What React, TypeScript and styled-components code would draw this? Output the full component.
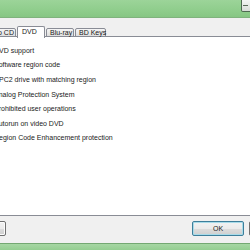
import React from "react";
import styled, { createGlobalStyle } from "styled-components";

const Global = createGlobalStyle`
  html, body { margin: 0; padding: 0; background: #f0f0f0; }
  body { width: 250px; height: 250px; overflow: hidden; }
`;

const Frame = styled.div`
  width: 250px;
  height: 250px;
  overflow: hidden;
  display: flex;
  flex-direction: column;
  font-family: "Liberation Sans", Arial, sans-serif;
  font-size: 7px;
  color: #1a1a1a;
`;

const TitleBar = styled.div`
  height: 18px;
  flex: none;
  box-sizing: border-box;
  background: linear-gradient(180deg, #9cd499 0%, #8fcd8c 60%, #86c683 100%);
  border-bottom: 1px solid #7fb27d;
  display: flex;
  justify-content: flex-end;
  align-items: flex-start;
`;

const CaptionButton = styled.div`
  width: 12px;
  height: 12px;
  margin-right: -3px;
  box-sizing: border-box;
  border: 1px solid #4f6a52;
  border-top: none;
  border-radius: 0 0 2px 2px;
  background: linear-gradient(180deg, #f4f6f4, #d8ddd8);
  display: flex;
  align-items: center;
  justify-content: center;
`;

const Dash = styled.div`
  width: 5px;
  height: 1px;
  background: #5a6a5a;
  margin-left: -3px;
`;

const Body = styled.div`
  flex: 1;
  margin: 0 -60px 0 -40px;
  background: #f0f0f0;
  display: flex;
  flex-direction: column;
`;

const TabRow = styled.div`
  height: 19px;
  flex: none;
  box-sizing: border-box;
  padding: 8px 0 0 20px;
  display: flex;
  align-items: flex-end;
  gap: 1px;
  position: relative;
  z-index: 2;
`;

const Tab = styled.div<{ $selected?: boolean; $w: number }>`
  width: ${(p) => p.$w}px;
  height: 9px;
  box-sizing: border-box;
  border: 1px solid #898c95;
  border-bottom: ${(p) => (p.$selected ? "none" : "1px solid #898c95")};
  border-radius: 2px 2px 0 0;
  background: ${(p) =>
    p.$selected ? "#ffffff" : "linear-gradient(180deg, #f5f5f5 0%, #ebebeb 50%, #dedede 100%)"};
  padding-left: ${(p) => (p.$selected ? 4 : 3)}px;
  display: flex;
  align-items: center;
  white-space: nowrap;
  ${(p) => (p.$selected ? "margin-bottom: -1px; height: 12px; padding-bottom: 2px;" : "")}
`;

const Panel = styled.div`
  flex: 1;
  margin-top: -1px;
  background: #ffffff;
  border: 1px solid #898c95;
  box-sizing: border-box;
  padding: 6px 0 0 19px;
  display: flex;
  flex-direction: column;
  position: relative;
  z-index: 1;
`;

const Row = styled.div`
  height: 14.6px;
  display: flex;
  align-items: center;
  gap: 5px;
  white-space: nowrap;
`;

const Check = styled.div`
  width: 9px;
  height: 9px;
  box-sizing: border-box;
  border: 1px solid #8f8f8f;
  background: linear-gradient(135deg, #e6e6e6, #ffffff);
`;

const ButtonRow = styled.div`
  height: 27px;
  flex: none;
  box-sizing: border-box;
  padding: 5px 9px 0 7px;
  display: flex;
  align-items: flex-start;
  gap: 5px;
`;

const Spacer = styled.div`
  flex: 1;
`;

const Button = styled.div<{ $default?: boolean; $w: number }>`
  width: ${(p) => p.$w}px;
  height: 15px;
  box-sizing: border-box;
  border: 1px solid ${(p) => (p.$default ? "#3d7e9a" : "#707070")};
  border-radius: 2px;
  background: linear-gradient(180deg, #f2f2f2 0%, #ebebeb 50%, #dddddd 51%, #cfcfcf 100%);
  box-shadow: ${(p) => (p.$default ? "inset 0 0 0 1px #a8dbe9" : "inset 0 0 0 1px #fcfcfc")};
  display: flex;
  align-items: center;
  justify-content: center;
  white-space: nowrap;
`;

const BottomBand = styled.div`
  height: 7px;
  flex: none;
  box-sizing: border-box;
  border-top: 1px solid #74a872;
  background: linear-gradient(180deg, #a6d6a3, #94cd91);
`;

const tabs = [
  { label: "Audio CD", w: 36 },
  { label: "DVD", w: 28, selected: true },
  { label: "Blu-ray", w: 28 },
  { label: "BD Keys", w: 31 },
];

const options = [
  "DVD support",
  "Software region code",
  "RPC2 drive with matching region",
  "Analog Protection System",
  "Prohibited user operations",
  "Autorun on video DVD",
  "Region Code Enhancement protection",
];

export default function App() {
  return (
    <>
      <Global />
      <Frame>
        <TitleBar>
          <CaptionButton>
            <Dash />
          </CaptionButton>
        </TitleBar>
        <Body>
          <TabRow>
            {tabs.map((t) => (
              <Tab key={t.label} $w={t.w} $selected={t.selected}>
                {t.label}
              </Tab>
            ))}
          </TabRow>
          <Panel>
            {options.map((o) => (
              <Row key={o}>
                <Check />
                <span>{o}</span>
              </Row>
            ))}
          </Panel>
          <ButtonRow>
            <Button $w={39}>Defaults</Button>
            <Spacer />
            <Button $w={52} $default>
              OK
            </Button>
            <Button $w={52}>Cancel</Button>
          </ButtonRow>
        </Body>
        <BottomBand />
      </Frame>
    </>
  );
}
